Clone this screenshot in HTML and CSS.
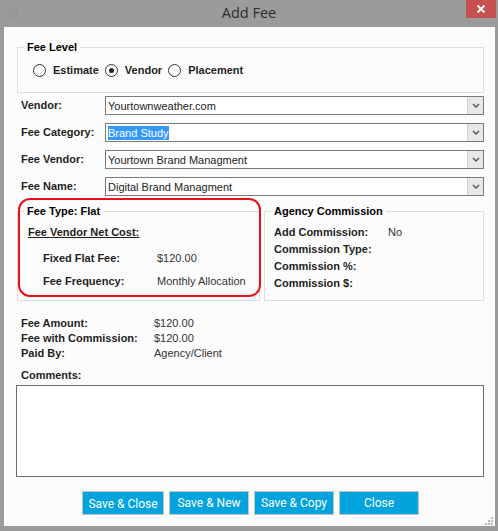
FILE: index.html
```html
<!DOCTYPE html>
<html lang="en">

<head>
    <meta charset="UTF-8">
    <meta name="viewport" content="width=device-width, initial-scale=1.0">
    <title>Add Fee</title>
    <link rel="stylesheet" href="styles.css">
</head>

<body>
    <div class="window">
        <div class="titlebar">
            <span class="appIcon"></span>
            <span class="title">Add Fee</span>
            <span class="closeBtn">
                <svg width="10" height="10" viewBox="0 0 10 10">
                    <path d="M1.5 1.5 L8.5 8.5 M8.5 1.5 L1.5 8.5" stroke="#fff" stroke-width="1.8" />
                </svg>
            </span>
        </div>
        <div class="client">
            <fieldset class="group levelGroup">
                <legend>Fee Level</legend>
                <div class="radios">
                    <label class="radio"><span class="circle"></span>Estimate</label>
                    <label class="radio"><span class="circle checked"></span>Vendor</label>
                    <label class="radio"><span class="circle"></span>Placement</label>
                </div>
            </fieldset>

            <div class="fields">
                <div class="field">
                    <span class="label">Vendor:</span>
                    <div class="combo">
                        <span class="comboText">Yourtownweather.com</span>
                        <span class="comboBtn"><svg width="8" height="5" viewBox="0 0 8 5"><path d="M1 1 L4 4 L7 1" fill="none" stroke="#555" stroke-width="1.4" /></svg></span>
                    </div>
                </div>
                <div class="field">
                    <span class="label">Fee Category:</span>
                    <div class="combo">
                        <span class="comboText"><span class="selected">Brand Study</span></span>
                        <span class="comboBtn"><svg width="8" height="5" viewBox="0 0 8 5"><path d="M1 1 L4 4 L7 1" fill="none" stroke="#555" stroke-width="1.4" /></svg></span>
                    </div>
                </div>
                <div class="field">
                    <span class="label">Fee Vendor:</span>
                    <div class="combo">
                        <span class="comboText">Yourtown Brand Managment</span>
                        <span class="comboBtn"><svg width="8" height="5" viewBox="0 0 8 5"><path d="M1 1 L4 4 L7 1" fill="none" stroke="#555" stroke-width="1.4" /></svg></span>
                    </div>
                </div>
                <div class="field">
                    <span class="label">Fee Name:</span>
                    <div class="combo">
                        <span class="comboText">Digital Brand Managment</span>
                        <span class="comboBtn"><svg width="8" height="5" viewBox="0 0 8 5"><path d="M1 1 L4 4 L7 1" fill="none" stroke="#555" stroke-width="1.4" /></svg></span>
                    </div>
                </div>
            </div>

            <div class="groups">
                <fieldset class="group feeType">
                    <legend>Fee Type: Flat</legend>
                    <div class="netCost">Fee Vendor Net Cost:</div>
                    <div class="feeRows">
                        <span class="label">Fixed Flat Fee:</span><span class="value">$120.00</span>
                        <span class="label">Fee Frequency:</span><span class="value">Monthly Allocation</span>
                    </div>
                </fieldset>
                <fieldset class="group agency">
                    <legend>Agency Commission</legend>
                    <div class="agencyRows">
                        <span class="label">Add Commission:</span><span class="value">No</span>
                        <span class="label">Commission Type:</span><span class="value"></span>
                        <span class="label">Commission %:</span><span class="value"></span>
                        <span class="label">Commission $:</span><span class="value"></span>
                    </div>
                </fieldset>
                <div class="highlight"></div>
            </div>

            <div class="totals">
                <span class="label">Fee Amount:</span><span class="value">$120.00</span>
                <span class="label">Fee with Commission:</span><span class="value">$120.00</span>
                <span class="label">Paid By:</span><span class="value">Agency/Client</span>
            </div>

            <div class="commentsLabel">Comments:</div>
            <div class="comments"></div>

            <div class="actions">
                <button class="btn wide">Save &amp; Close</button>
                <button class="btn">Save &amp; New</button>
                <button class="btn">Save &amp; Copy</button>
                <button class="btn">Close</button>
            </div>

            <svg class="grip" width="9" height="9" viewBox="0 0 9 9">
                <rect x="7" y="1" width="2" height="2" fill="#b8b8b8" />
                <rect x="4" y="4" width="2" height="2" fill="#b8b8b8" />
                <rect x="7" y="4" width="2" height="2" fill="#b8b8b8" />
                <rect x="1" y="7" width="2" height="2" fill="#b8b8b8" />
                <rect x="4" y="7" width="2" height="2" fill="#b8b8b8" />
                <rect x="7" y="7" width="2" height="2" fill="#b8b8b8" />
            </svg>
        </div>
    </div>
</body>

</html>
```

FILE: styles.css
```css
html {
    margin: 0px;
    height: 100%;
}

body {
    margin: 0px;
    padding: 0px;
    background-color: #9b9b9b;
    font-family: 'Liberation Sans', Arial, sans-serif;
    font-size: 11px;
    color: #1f1f1f;
}

.window {
    width: 498px;
    height: 531px;
    display: flex;
    flex-direction: column;
}

/* title bar */
.titlebar {
    height: 27px;
    display: grid;
    grid-template-columns: 1fr auto 1fr;
    align-items: start;
}

.appIcon {
    width: 12px;
    height: 12px;
    margin: 7px 0 0 7px;
    border-radius: 50%;
    background-color: #979797;
}

.title {
    font-family: 'Open Sans', sans-serif;
    font-size: 14.5px;
    line-height: 26px;
    color: #2e2e2e;
}

.closeBtn {
    justify-self: end;
    width: 30px;
    height: 18px;
    margin-right: 2px;
    background-color: #c75050;
    display: flex;
    justify-content: center;
    align-items: center;
}

/* client area */
.client {
    position: relative;
    height: 499px;
    margin: 0 3px 0 4px;
    padding: 13px 11px 0 13px;
    box-sizing: border-box;
    background-color: #fcfcfc;
}

.group {
    margin: 0;
    padding: 0 6px;
    border: 1px solid #dcdcdc;
    min-width: 0;
    box-sizing: border-box;
}

.group legend {
    padding: 0 3px;
    font-weight: bold;
    line-height: 14px;
    color: #000;
}

.levelGroup {
    padding-top: 9px;
    padding-bottom: 15px;
}

.radios {
    display: flex;
    margin-left: 9px;
    line-height: 14px;
    font-weight: bold;
}

.radio {
    display: flex;
    align-items: center;
    margin-right: 6px;
}

.circle {
    width: 11px;
    height: 11px;
    border: 1px solid #333;
    border-radius: 50%;
    background-color: #fff;
    margin-right: 7px;
    display: flex;
    justify-content: center;
    align-items: center;
}

.circle.checked::after {
    content: '';
    width: 5px;
    height: 5px;
    border-radius: 50%;
    background-color: #222;
}

/* combo rows */
.fields {
    margin-top: 3px;
    display: flex;
    flex-direction: column;
    gap: 8px;
}

.field {
    display: flex;
    align-items: center;
    padding-left: 4px;
}

.field .label {
    width: 84px;
    font-weight: bold;
    line-height: 19px;
}

.combo {
    flex: 1;
    height: 19px;
    box-sizing: border-box;
    border: 1px solid #7a7a7a;
    background-color: #fff;
    display: flex;
    align-items: center;
}

.comboText {
    flex: 1;
    padding-left: 2px;
    color: #222;
}

.selected {
    background-color: #3399ff;
    color: #fff;
    padding: 1px 0;
}

.comboBtn {
    width: 16px;
    height: 17px;
    box-sizing: border-box;
    border-left: 1px solid #d0d0d0;
    background-color: #e8e8e8;
    display: flex;
    justify-content: center;
    align-items: center;
}

/* group boxes */
.groups {
    position: relative;
    margin-top: 8px;
    display: flex;
    gap: 4px;
}

.feeType {
    width: 243px;
    height: 97px;
    padding-top: 7px;
}

.agency {
    flex: 1;
    height: 97px;
    padding-top: 6px;
}

.netCost {
    margin-left: 4px;
    font-weight: bold;
    text-decoration: underline;
    line-height: 14px;
    margin-bottom: 12px;
}

.feeRows {
    display: grid;
    grid-template-columns: 114px auto;
    row-gap: 9px;
    padding-left: 19px;
    line-height: 14px;
}

.agencyRows {
    display: grid;
    grid-template-columns: 114px auto;
    padding-left: 3px;
    line-height: 17px;
}

.label {
    font-weight: bold;
}

.value {
    color: #333;
}

.highlight {
    position: absolute;
    left: 1px;
    top: -6px;
    width: 243px;
    height: 99px;
    box-sizing: border-box;
    border: 2px solid #e8101a;
    border-radius: 12px;
}

/* totals */
.totals {
    margin-top: 15px;
    padding-left: 4px;
    display: grid;
    grid-template-columns: 133px auto;
    line-height: 15px;
}

.commentsLabel {
    margin-top: 7px;
    padding-left: 4px;
    font-weight: bold;
    line-height: 15px;
}

.comments {
    margin: 2px 0 0 -1px;
    height: 92px;
    box-sizing: border-box;
    border: 1px solid #6d6d6d;
    background-color: #fff;
}

/* buttons */
.actions {
    margin-top: 14px;
    display: flex;
    justify-content: center;
    gap: 5px;
}

.btn {
    width: 80px;
    height: 24px;
    padding: 0;
    border: 1px solid #c4c4c4;
    background-color: #03a3dd;
    color: #fff;
    font-family: Roboto, sans-serif;
    font-size: 12px;
    outline: none;
}

.btn.wide {
    width: 82px;
    padding-top: 2px;
}

.grip {
    position: absolute;
    right: 2px;
    bottom: 1px;
}
```
